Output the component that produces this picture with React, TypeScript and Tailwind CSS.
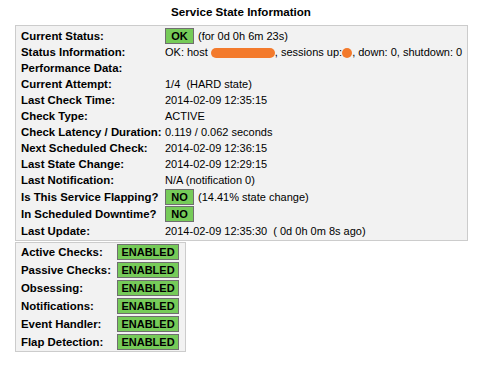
import type { ReactNode } from 'react';

const Badge = ({ text, w }: { text: string; w: string }) => (
  <span
    className={`inline-flex ${w} h-[16px] items-center justify-center border border-[#6f6f6f] bg-[#76cb59] text-[11px] font-bold text-black`}
  >
    {text}
  </span>
);

const Blot = ({ w }: { w: string }) => (
  <span className={`inline-block ${w} h-[10px] rounded-full bg-[#f37a2c] align-middle`} />
);

const Row = ({ label, h = 'h-[16px]', children }: { label: string; h?: string; children?: ReactNode }) => (
  <div className={`flex ${h} items-center`}>
    <div className="w-[144px] shrink-0 whitespace-nowrap text-[11.4px] font-bold">{label}</div>
    <div className="flex items-center gap-[4px] whitespace-nowrap">{children}</div>
  </div>
);

const Toggle = ({ label }: { label: string }) => (
  <div className="flex h-[18px] items-center">
    <div className="w-[96px] shrink-0 whitespace-nowrap text-[11.4px] font-bold">{label}</div>
    <Badge text="ENABLED" w="w-[62px]" />
  </div>
);

export default function App() {
  return (
    <div
      className="h-[369px] w-[482px] bg-white text-[11px] leading-[14px] text-black"
      style={{ fontFamily: '"Liberation Sans", Arial, sans-serif' }}
    >
      {/* titulo */}
      <div className="flex h-[25px] items-center justify-center pb-[2px] text-[11.6px] font-bold">
        Service State Information
      </div>

      <div className="ml-[15px] w-[453px] border border-[#cccccc] bg-[#f2f2f2] pl-[5px] pt-[1px]">
        <Row label="Current Status:" h="h-[17px]">
          <Badge text="OK" w="w-[29px]" />
          <span>(for 0d 0h 6m 23s)</span>
        </Row>
        <Row label="Status Information:">
          <span>
            OK: host <Blot w="w-[64px]" />, sessions up:<Blot w="w-[10px]" />, down: 0, shutdown: 0
          </span>
        </Row>
        <Row label="Performance Data:" />
        <Row label="Current Attempt:">
          <span className="whitespace-pre">1/4  (HARD state)</span>
        </Row>
        <Row label="Last Check Time:">2014-02-09 12:35:15</Row>
        <Row label="Check Type:">ACTIVE</Row>
        <Row label="Check Latency / Duration:">0.119 / 0.062 seconds</Row>
        <Row label="Next Scheduled Check:">2014-02-09 12:36:15</Row>
        <Row label="Last State Change:">2014-02-09 12:29:15</Row>
        <Row label="Last Notification:">N/A (notification 0)</Row>
        <Row label="Is This Service Flapping?" h="h-[17px]">
          <Badge text="NO" w="w-[29px]" />
          <span>(14.41% state change)</span>
        </Row>
        <Row label="In Scheduled Downtime?" h="h-[17px]">
          <Badge text="NO" w="w-[29px]" />
        </Row>
        <Row label="Last Update:" h="h-[18px]">
          <span className="whitespace-pre">2014-02-09 12:35:30  ( 0d 0h 0m 8s ago)</span>
        </Row>
      </div>

      <div className="ml-[15px] mt-[1px] w-[171px] border border-[#cccccc] bg-[#f2f2f2] pl-[5px]">
        <Toggle label="Active Checks:" />
        <Toggle label="Passive Checks:" />
        <Toggle label="Obsessing:" />
        <Toggle label="Notifications:" />
        <Toggle label="Event Handler:" />
        <Toggle label="Flap Detection:" />
      </div>
    </div>
  );
}
